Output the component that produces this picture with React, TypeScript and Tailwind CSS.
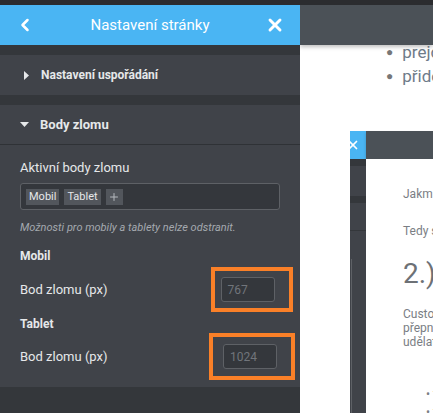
import { ChevronLeft, X, Plus } from "lucide-react"

const font = { fontFamily: "Roboto, 'Noto Sans', sans-serif" }

const Caret = ({ down }: { down?: boolean }) =>
    down ? (
        <svg width="9" height="6" viewBox="0 0 9 6" className="fill-[#e6e8ea]">
            <polygon points="0,0 9,0 4.5,5" />
        </svg>
    ) : (
        <svg width="6" height="9" viewBox="0 0 6 9" className="fill-[#e6e8ea]">
            <polygon points="0,0 5,4.5 0,9" />
        </svg>
    )

const Tag = ({ label }: { label: string }) => (
    <span className="h-[16px] px-[3px] bg-[#52565c] text-[11px] leading-[16px] text-[#e6e8ea]">{label}</span>
)

const NumberRow = ({ value, box }: { value: string; box: string }) => (
    <div className="flex items-center justify-between">
        <span className="text-[13px] text-[#e6e8ea]">Bod zlomu (px)</span>
        <div className={`border-[4px] border-[#fa8028] flex items-center justify-center ${box}`}>
            <div className="w-[54px] h-[25px] rounded-[3px] border border-[#5e6166] bg-[#34373c] text-[12px] text-[#71757b] pl-[6px] flex items-center">
                {value}
            </div>
        </div>
    </div>
)

const Panel = () => (
    <div className="w-[300px] h-full bg-[#34373b] flex flex-col shrink-0">
        <div className="h-[40px] bg-[#4ab5f3] flex items-center justify-between px-[15px] text-white">
            <ChevronLeft size={20} strokeWidth={3} />
            <span className="text-[15px]">Nastavení stránky</span>
            <X size={20} strokeWidth={3.5} />
        </div>
        <div className="h-[10px]" />
        <div className="h-[40px] bg-[#404349] flex items-center pl-[24px] gap-[11px]">
            <Caret />
            <span className="text-[12px] font-bold text-[#e6e8ea]">Nastavení uspořádání</span>
        </div>
        <div className="h-[10px]" />
        <div className="bg-[#404349] flex flex-col">
            <div className="h-[40px] flex items-center pl-[20px] gap-[11px] border-b border-[#2f3236]">
                <Caret down />
                <span className="text-[13px] font-bold text-[#e6e8ea]">Body zlomu</span>
            </div>
            <div className="px-[20px] pt-[15px] pb-[7px]">
                <div className="text-[13px] text-[#e6e8ea] leading-[16px]">Aktivní body zlomu</div>
                <div className="mt-[7px] h-[27px] border border-[#5e6166] rounded-[3px] bg-[#34373c] flex items-center gap-[5px] px-[5px]">
                    <Tag label="Mobil" />
                    <Tag label="Tablet" />
                    <span className="w-[17px] h-[16px] bg-[#52565c] flex items-center justify-center text-[#b5b9be]">
                        <Plus size={12} strokeWidth={2} />
                    </span>
                </div>
                <div className="mt-[11px] text-[11px] leading-[14px] italic text-[#a4a9af]">Možnosti pro mobily a tablety nelze odstranit.</div>
                <div className="mt-[14px] text-[12px] leading-[14px] font-bold text-[#e6e8ea]">Mobil</div>
                <div className="mt-[4px] -mr-[13px]">
                    <NumberRow value="767" box="w-[82px] h-[45px] pr-[9px]" />
                </div>
                <div className="mt-[5px] text-[12px] leading-[14px] font-bold text-[#e6e8ea]">Tablet</div>
                <div className="mt-[2px] -mr-[15px]">
                    <NumberRow value="1024" box="w-[86px] h-[47px] pr-[13px] pl-[9px]" />
                </div>
            </div>
        </div>
    </div>
)

const Embedded = () => (
    <div className="ml-[50px] mt-[43px] flex flex-col w-[200px]">
        <div className="flex h-[28px]">
            <div className="w-[16px] bg-[#4ab5f3] flex items-center text-white">
                <X size={14} strokeWidth={3} className="-ml-[4px]" />
            </div>
            <div className="flex-1 bg-[#4b5157] shadow-[0_2px_3px_rgba(0,0,0,0.2)]" />
        </div>
        <div className="flex h-[260px]">
            <div className="w-[16px] bg-[#404349] flex flex-col">
                <div className="h-[7px] bg-[#34373b]" />
                <div className="h-[30px]" />
                <div className="h-[7px] bg-[#34373b]" />
                <div className="h-[28px] border-b border-[#34373b]" />
                <div className="h-[154px] border-l border-[#5e6166] ml-[1px] mt-[28px]" />
            </div>
            <div className="flex-1 bg-white pl-[37px] text-[#7a7e84] text-[12px] whitespace-nowrap">
                <div className="mt-[27px] leading-[16px]">Jakmile</div>
                <div className="mt-[21px] leading-[16px]">Tedy se</div>
                <div className="mt-[19px] text-[28px] text-[#6d7176] leading-[32px]">2.) Custom</div>
                <div className="mt-[17px] leading-[14px]">
                    <div>Custom</div>
                    <div>přepnout</div>
                    <div>udělat</div>
                </div>
                <div className="mt-[36px] pl-[23px] leading-[18px] text-[#7a7e84]">
                    <div>• text</div>
                    <div>• text</div>
                </div>
            </div>
        </div>
    </div>
)

export default function App() {
    return (
        <div className="w-[433px] h-[413px] overflow-hidden bg-[#2b2c2f] flex flex-col" style={font}>
            <div className="h-[5px] shrink-0" />
            <div className="flex flex-1 min-h-0">
                <Panel />
                <div className="flex-1 bg-white flex flex-col overflow-hidden relative">
                    <div className="h-[40px] bg-[#4b5157] shrink-0 relative z-10 shadow-[0_2px_4px_rgba(0,0,0,0.25)]" />
                    <ul className="-mt-[5px] pl-[86px] text-[17px] leading-[24px] text-[#6e7b89] whitespace-nowrap">
                        <li className="flex items-center gap-[9px]"><span className="text-[12px] text-[#777]">●</span>prejdeme</li>
                        <li className="flex items-center gap-[9px]"><span className="text-[12px] text-[#777]">●</span>přideme</li>
                    </ul>
                    <Embedded />
                </div>
            </div>
        </div>
    )
}
